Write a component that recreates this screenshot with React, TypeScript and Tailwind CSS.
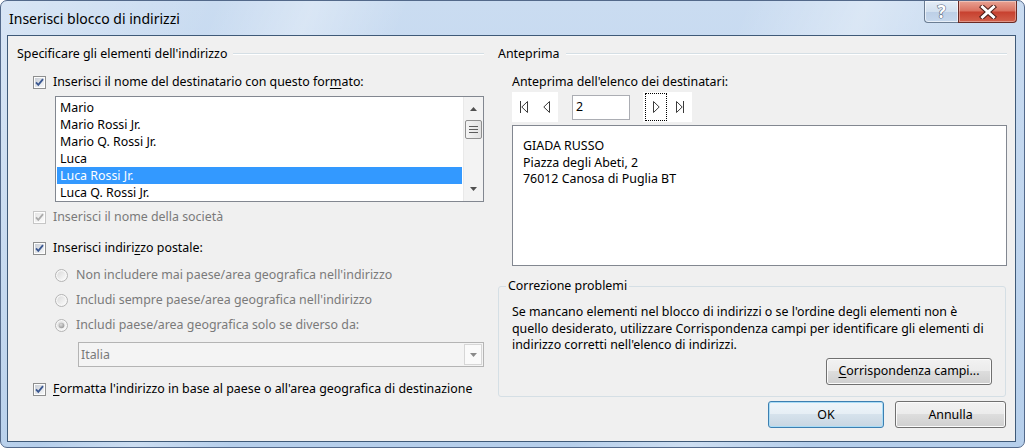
import React from "react";

// Win7 style "Inserisci blocco di indirizzi" dialog

function Checkbox({ disabled = false }: { disabled?: boolean }) {
  const id = disabled ? "cb-dis" : "cb-en";
  return (
    <svg width="13" height="13" viewBox="0 0 13 13" className="shrink-0">
      <defs>
        <linearGradient id={id} x1="0" y1="0" x2="1" y2="1">
          <stop offset="0" stopColor={disabled ? "#e6e6e6" : "#c9ced6"} />
          <stop offset="1" stopColor={disabled ? "#fbfbfb" : "#f7f8f9"} />
        </linearGradient>
      </defs>
      <rect x="0.5" y="0.5" width="12" height="12" fill="#fdfdfd" stroke={disabled ? "#c6c6c6" : "#8e8f8f"} />
      <rect x="2" y="2" width="9" height="9" fill={`url(#${id})`} />
      <path
        d="M3 6.4L5.3 8.9L10 3.1"
        fill="none"
        stroke={disabled ? "#ababab" : "#3b5891"}
        strokeWidth="1.8"
      />
    </svg>
  );
}

function Radio({ selected = false }: { selected?: boolean }) {
  return (
    <svg width="13" height="13" viewBox="0 0 13 13" className="shrink-0">
      <defs>
        <linearGradient id="rad" x1="0" y1="0" x2="1" y2="1">
          <stop offset="0" stopColor="#dadada" />
          <stop offset="1" stopColor="#fbfbfb" />
        </linearGradient>
        <radialGradient id="dot" cx="0.4" cy="0.35" r="0.7">
          <stop offset="0" stopColor="#dcdcdc" />
          <stop offset="1" stopColor="#959595" />
        </radialGradient>
      </defs>
      <circle cx="6.5" cy="6.5" r="6" fill="#f7f7f7" stroke="#b3b3b3" />
      <circle cx="6.5" cy="6.5" r="4.3" fill="url(#rad)" />
      {selected && <circle cx="6.5" cy="6.5" r="2.8" fill="url(#dot)" />}
    </svg>
  );
}

function GroupHeader({ label }: { label: string }) {
  return (
    <div className="flex h-[16px] items-center">
      <span className="leading-[16px]">{label}</span>
      <div className="ml-[6px] h-[2px] flex-1 border-t border-b border-t-[#d5dfe5] border-b-white" />
    </div>
  );
}

function Arrow({ up }: { up?: boolean }) {
  return (
    <svg width="7" height="4" viewBox="0 0 7 4">
      <path d={up ? "M0 4L3.5 0L7 4Z" : "M0 0L3.5 4L7 0Z"} fill="#505050" />
    </svg>
  );
}

function WinButton({
  children,
  primary = false,
  className = "",
}: {
  children: React.ReactNode;
  primary?: boolean;
  className?: string;
}) {
  return (
    <div
      className={`flex h-[27px] items-center justify-center rounded-[3px] border leading-[16px] ${
        primary
          ? "border-[#3c7fb1] shadow-[inset_0_0_0_1px_#a9dcf6] bg-[linear-gradient(#eef5fa_0%,#e6eef5_49%,#d6e2ec_50%,#c8d6e2_100%)]"
          : "border-[#707070] shadow-[inset_0_0_0_1px_#fbfbfb] bg-[linear-gradient(#f2f2f2_0%,#ebebeb_49%,#dddddd_50%,#cfcfcf_100%)]"
      } ${className}`}
    >
      {children}
    </div>
  );
}

const names = [
  "Mario",
  "Mario Rossi Jr.",
  "Mario Q. Rossi Jr.",
  "Luca",
  "Luca Rossi Jr.",
  "Luca Q. Rossi Jr.",
];

export default function App() {
  return (
    <div className="h-[448px] w-[1025px] overflow-hidden bg-white font-['Noto_Sans','DejaVu_Sans',sans-serif] text-[12.4px] text-black">
      <div className="flex h-full flex-col rounded-[7px] border border-[#53698a] bg-[linear-gradient(112deg,rgba(255,255,255,0.28)_0%,rgba(255,255,255,0)_18%,rgba(255,255,255,0.3)_26%,rgba(255,255,255,0)_34%,rgba(255,255,255,0)_62%,rgba(255,255,255,0.32)_72%,rgba(255,255,255,0)_82%),linear-gradient(180deg,#cadcf1,#b6cfeb)]">
        {/* title bar */}
        <div className="flex h-[34px] shrink-0 items-start justify-between">
          <div className="ml-[8px] mt-[9px] text-[14px] leading-[18px]">Inserisci blocco di indirizzi</div>
          <div className="mr-[7px] flex h-[22px]">
            <div className="flex w-[34px] items-center justify-center rounded-bl-[4px] border border-t-0 border-r-0 border-[#6b7d93] bg-[linear-gradient(#e4edf7_0%,#d2e0ef_50%,#bccfe6_51%,#c6d8ed_100%)] shadow-[inset_0_0_0_1px_rgba(255,255,255,0.6)]">
              <span className="text-[17px] font-bold leading-[18px] text-white [-webkit-text-stroke:1.2px_#56667b] [paint-order:stroke_fill]">
                ?
              </span>
            </div>
            <div className="flex w-[59px] items-center justify-center rounded-br-[4px] border border-t-0 border-[#6a2a24] bg-[linear-gradient(#e8a293_0%,#d9705f_48%,#c7402f_52%,#d2604b_100%)] shadow-[inset_0_0_0_1px_rgba(255,255,255,0.35)]">
              <svg width="18" height="14" viewBox="0 0 18 14">
                <path d="M3.5 2L14.5 12M14.5 2L3.5 12" stroke="#4a1c17" strokeWidth="5" strokeLinecap="square" />
                <path d="M3.5 2L14.5 12M14.5 2L3.5 12" stroke="#ffffff" strokeWidth="3" strokeLinecap="square" />
              </svg>
            </div>
          </div>
        </div>

        {/* client area */}
        <div className="mb-[5px] ml-[6px] mr-[8px] flex flex-1 border border-[#3f5a78] bg-[#f0f0f0]">
          {/* left column */}
          <div className="ml-[9px] flex w-[467px] flex-col">
            <div className="mt-[10px]">
              <GroupHeader label="Specificare gli elementi dell'indirizzo" />
            </div>

            <div className="ml-[16px] mt-[12px] flex h-[16px] items-center gap-[7px]">
              <Checkbox />
              <span className="leading-[16px]">
                Inserisci il nome del destinatario con questo for
                <span className="underline underline-offset-[2px]">m</span>ato:
              </span>
            </div>

            <div className="ml-[38px] mt-[6px] flex h-[106px] w-[429px] border border-[#828790] bg-white">
              <div className="flex flex-1 flex-col pt-[2px]">
                {names.map((n) => {
                  const sel = n === "Luca Rossi Jr.";
                  return (
                    <div
                      key={n}
                      className={`mx-[1px] h-[17px] pl-[3px] leading-[17px] ${
                        sel ? "bg-[#3399ff] text-white" : ""
                      }`}
                    >
                      {n}
                    </div>
                  );
                })}
              </div>
              <div className="flex w-[20px] flex-col border-l border-[#e9e9e9] bg-[#f3f3f3]">
                <div className="flex h-[22px] items-center justify-center pt-[1px]">
                  <Arrow up />
                </div>
                <div className="mx-[1px] mt-[1px] flex h-[19px] flex-col items-center justify-center gap-[2px] rounded-[2px] border border-[#8f8f8f] bg-[linear-gradient(90deg,#f4f4f4,#e2e2e2)]">
                  <div className="h-px w-[9px] bg-[#5c5c5c]" />
                  <div className="h-px w-[9px] bg-[#5c5c5c]" />
                  <div className="h-px w-[9px] bg-[#5c5c5c]" />
                </div>
                <div className="flex-1" />
                <div className="flex h-[22px] items-center justify-center pb-[3px]">
                  <Arrow />
                </div>
              </div>
            </div>

            <div className="ml-[16px] mt-[7px] flex h-[16px] items-center gap-[7px]">
              <Checkbox disabled />
              <span className="leading-[16px] text-[#7a7a7a]">Inserisci il nome della società</span>
            </div>

            <div className="ml-[16px] mt-[15px] flex h-[16px] items-center gap-[7px]">
              <Checkbox />
              <span className="leading-[16px]">
                Inserisci indiri<span className="underline underline-offset-[2px]">z</span>zo postale:
              </span>
            </div>

            <div className="ml-[38px] mt-[11px] flex h-[16px] items-center gap-[8px] text-[#7a7a7a]">
              <Radio />
              <span className="leading-[16px]">Non includere mai paese/area geografica nell'indirizzo</span>
            </div>
            <div className="ml-[38px] mt-[9px] flex h-[16px] items-center gap-[8px] text-[#7a7a7a]">
              <Radio />
              <span className="leading-[16px]">Includi sempre paese/area geografica nell'indirizzo</span>
            </div>
            <div className="ml-[38px] mt-[9px] flex h-[16px] items-center gap-[8px] text-[#7a7a7a]">
              <Radio selected />
              <span className="leading-[16px]">Includi paese/area geografica solo se diverso da:</span>
            </div>

            <div className="ml-[61px] mt-[9px] flex h-[25px] w-[406px] items-stretch border border-[#b4b4b4] bg-[#f4f4f4]">
              <div className="flex flex-1 items-center pl-[2px] leading-[16px] text-[#7a7a7a]">Italia</div>
              <div className="m-[1px] flex w-[18px] items-center justify-center border border-[#d6d6d6] bg-[#fafafa]">
                <svg width="7" height="4" viewBox="0 0 7 4">
                  <path d="M0 0L3.5 4L7 0Z" fill="#8a8a8a" />
                </svg>
              </div>
            </div>

            <div className="ml-[16px] mt-[14px] flex h-[16px] items-center gap-[7px]">
              <Checkbox />
              <span className="leading-[16px]">
                <span className="underline underline-offset-[2px]">F</span>ormatta l'indirizzo in base al paese o
                all'area geografica di destinazione
              </span>
            </div>
          </div>

          {/* right column */}
          <div className="ml-[14px] flex w-[509px] flex-col">
            <div className="mt-[10px]">
              <GroupHeader label="Anteprima" />
            </div>

            <div className="ml-[14px] mt-[12px] h-[16px] leading-[16px]">Anteprima dell'elenco dei destinatari:</div>

            <div className="ml-[14px] mt-[2px] flex h-[30px] items-center">
              <div className="flex h-[30px] w-[46px] items-center bg-white pl-[8px]">
                <svg width="8" height="12" viewBox="0 0 8 12">
                  <path d="M0.5 0V12" stroke="#3a3a3a" />
                  <path d="M7.5 0.5L1.8 6L7.5 11.5Z" fill="none" stroke="#3a3a3a" />
                </svg>
                <svg width="7" height="12" viewBox="0 0 7 12" className="ml-[15px]">
                  <path d="M6.5 0.5L0.8 6L6.5 11.5Z" fill="none" stroke="#3a3a3a" />
                </svg>
              </div>
              <div className="ml-[14px] flex h-[25px] w-[58px] items-center border border-[#abadb3] bg-white pl-[3px] leading-[16px]">
                2
              </div>
              <div className="ml-[13px] flex h-[30px] w-[49px] items-center bg-white pl-[2px]">
                <div className="flex h-[28px] w-[22px] items-center border border-dotted border-black pl-[7px]">
                  <svg width="7" height="12" viewBox="0 0 7 12">
                    <path d="M0.5 0.5L6.2 6L0.5 11.5Z" fill="none" stroke="#3a3a3a" />
                  </svg>
                </div>
                <svg width="8" height="12" viewBox="0 0 8 12" className="ml-[9px]">
                  <path d="M0.5 0.5L6.2 6L0.5 11.5Z" fill="none" stroke="#3a3a3a" />
                  <path d="M7.5 0V12" stroke="#3a3a3a" />
                </svg>
              </div>
            </div>

            <div className="ml-[14px] mt-[3px] h-[141px] w-[495px] border border-[#828790] bg-white pl-[10px] pt-[12px] leading-[16.5px]">
              <div>GIADA RUSSO</div>
              <div>Piazza degli Abeti, 2</div>
              <div>76012 Canosa di Puglia BT</div>
            </div>

            <fieldset className="mt-[12px] flex h-[119px] w-[508px] flex-col rounded-[3px] border border-[#d5dfe5] px-[13px]">
              <legend className="ml-[-6px] h-[16px] px-[2px] leading-[16px]">Correzione problemi</legend>
              <div className="mt-[10px] whitespace-nowrap leading-[16.5px]">
                Se mancano elementi nel blocco di indirizzi o se l'ordine degli elementi non è
                <br />
                quello desiderato, utilizzare Corrispondenza campi per identificare gli elementi di
                <br />
                indirizzo corretti nell'elenco di indirizzi.
              </div>
              <div className="mt-[4px] flex justify-end">
                <WinButton className="w-[166px]">
                  <span>
                    <span className="underline underline-offset-[2px]">C</span>orrispondenza campi...
                  </span>
                </WinButton>
              </div>
            </fieldset>

            <div className="mt-[4px] flex w-[508px] justify-end gap-[11px]">
              <WinButton primary className="w-[116px]">
                OK
              </WinButton>
              <WinButton className="w-[111px]">Annulla</WinButton>
            </div>
          </div>
        </div>
      </div>
    </div>
  );
}
